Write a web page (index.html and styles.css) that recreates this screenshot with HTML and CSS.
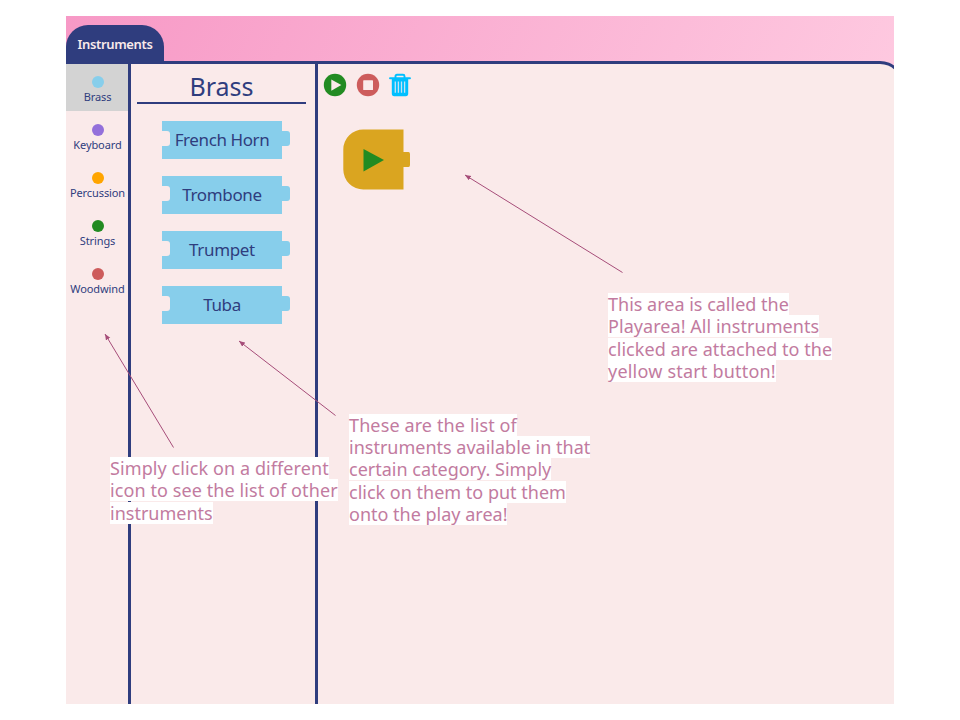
FILE: index.html
```html
<!DOCTYPE html>
<html lang="en">
<head>
<meta charset="utf-8">
<title>Instruments</title>
<link rel="stylesheet" href="styles.css">
</head>
<body>
<main class="app">
  <header class="top"><div class="tab">Instruments</div></header>
  <div class="workspace">
    <nav class="categories">
      <div class="category active"><i class="dot brass"></i><span>Brass</span></div>
      <div class="category"><i class="dot keyboard"></i><span>Keyboard</span></div>
      <div class="category"><i class="dot percussion"></i><span>Percussion</span></div>
      <div class="category"><i class="dot strings"></i><span>Strings</span></div>
      <div class="category"><i class="dot woodwind"></i><span>Woodwind</span></div>
    </nav>
    <section class="list">
      <h1>Brass</h1>
      <div class="piece horn">French Horn</div>
      <div class="piece">Trombone</div>
      <div class="piece">Trumpet</div>
      <div class="piece">Tuba</div>
    </section>
    <section class="play">
      <div class="tools">
        <svg width="24" height="24" viewBox="0 0 24 24"><circle cx="12" cy="12" r="11.2" fill="#228b22"/><path d="M8.300 6.400v11.400l10-5.700z" fill="#faeaea"/></svg>
        <svg width="24" height="24" viewBox="0 0 24 24"><circle cx="12" cy="12" r="11.2" fill="#cd5c5c"/><rect x="7.200" y="7.200" width="9.800" height="9.800" rx=".6" fill="#faeaea"/></svg>
        <svg width="22" height="24" viewBox="0 0 22 24"><path d="M6.500 5V3.300Q6.500 1.800 8 1.800h6q1.500 0 1.500 1.500V5M1 5.300h20" fill="none" stroke="#00bfff" stroke-width="1.900" stroke-linecap="round"/><path d="M2.800 5h16.400v15.500q0 2.700-2.400 2.700H5.200q-2.400 0-2.400-2.700z" fill="#00bfff"/><path d="M6.300 8.500v11.300M9.400 8.500v11.300M12.500 8.500v11.300M15.600 8.500v11.300" stroke="#c5e2f5" stroke-width="1.300"/></svg>
      </div>
      <svg class="start" width="68" height="62" viewBox="0 0 68 62"><path d="M21.500 .5h40v22.500h5q1.500 0 1.500 2v11q0 2-1.500 2h-5v22.500h-40A20 20 0 0 1 1.300 40.500v-20A20 20 0 0 1 21.500 .5z" fill="#daa520"/><path d="M21.500 20v22.500L42 31z" fill="#228b22"/></svg>
    </section>
  </div>
</main>
<svg class="arrows" width="960" height="720" viewBox="0 0 960 720">
  <defs><marker id="tip" markerWidth="7" markerHeight="6" refX="6" refY="2.500" orient="auto" markerUnits="userSpaceOnUse"><path d="M0 0l6 2.500L0 5z"/></marker></defs>
  <path d="M622.500 272.500L465 175"/>
  <path d="M335.500 415.500L239 341"/>
  <path d="M173.500 447.500L105 334"/>
</svg>
<p class="note note-category"><span>Simply click on a different</span><span>icon to see the list of other</span><span class="even">instruments</span></p>
<p class="note note-list"><span class="wide">These are the list of</span><span class="even">instruments available in that</span><span class="even">certain category. Simply</span><span class="even">click on them to put them</span><span class="even">onto the play area!</span></p>
<p class="note note-play"><span class="even">This area is called the</span><span class="slight">Playarea! All instruments</span><span class="slight">clicked are attached to the</span><span class="widest">yellow start button!</span></p>
</body>
</html>
```
FILE: styles.css
```css
* { box-sizing: border-box; }
body { margin: 0; width: 960px; height: 720px; overflow: hidden; position: relative; background: #fff; padding: 16px 66px; color: #2f3d7e; font-family: "Noto Sans", "Open Sans", sans-serif; }
.app { width: 828px; height: 688px; overflow: hidden; display: flex; flex-direction: column; background: linear-gradient(115deg, #f799c6, #fec9e0) 0 0 / 100% 60px no-repeat; }
.top { height: 45px; padding-top: 9px; flex: none; }
.tab { width: 98px; height: 37px; padding-top: 10px; border-radius: 22px 22px 0 0; background: #2f3d7e; color: #faeaea; font-size: 13px; line-height: 18px; font-weight: 600; text-align: center; letter-spacing: -.35px; }
.workspace { width: 838px; flex: 1; display: flex; border-top: 3px solid #2f3d7e; border-right: 3px solid #2f3d7e; border-top-right-radius: 24px; background: #faeaea; }
.categories { width: 62px; flex: none; }
.category { height: 48px; padding-top: 12px; display: flex; flex-direction: column; align-items: center; font-size: 11px; line-height: 15px; letter-spacing: -.1px; white-space: nowrap; }
.category.active { height: 47px; margin-bottom: 1px; background: #d3d3d3; }
.category span { margin-top: 1px; padding-left: 1px; }
.dot { width: 12px; height: 12px; margin-left: 1px; border-radius: 50%; flex: none; }
.brass { background: #87ceeb; }
.keyboard { background: #9370db; }
.percussion { background: #ffa500; }
.strings { background: #228b22; }
.woodwind { background: #cd5c5c; }
.list { width: 190px; flex: none; border-left: 3px solid #2f3d7e; border-right: 3px solid #2f3d7e; padding: 5px 9px 0 6px; }
h1 { margin: 0 0 17px; height: 35px; border-bottom: 2px solid #2f3d7e; text-align: center; font-size: 25px; line-height: 34px; font-weight: 400; }
.piece { position: relative; width: 120px; height: 38px; margin: 0 0 17px 25px; background: #87ceeb; text-align: center; font-size: 17px; line-height: 37px; letter-spacing: -.35px; white-space: nowrap; }
.horn { letter-spacing: -.4px; }
.piece::before, .piece::after { content: ""; position: absolute; top: 10px; width: 8px; height: 15px; border-radius: 0 3px 3px 0; }
.piece::before { left: 0; background: #faeaea; }
.piece::after { left: 120px; background: #87ceeb; }
.play { flex: 1; padding: 9px 0 0 5px; }
.tools { display: flex; gap: 9px; height: 24px; }
.start { display: block; margin: 32px 0 0 19px; }
.arrows { position: absolute; left: 0; top: 0; fill: none; stroke: #a64d79; stroke-width: 1; }
.arrows path { marker-end: url(#tip); }
.arrows marker path { fill: #a64d79; stroke: none; marker-end: none; }
.note { position: absolute; margin: 0; font-size: 18px; line-height: 22px; color: #c27ba0; white-space: nowrap; }
.note span { display: block; width: fit-content; height: 22px; margin-bottom: .4px; background: #fff; letter-spacing: .09px; }
.note .even { letter-spacing: 0; }
.note .slight { letter-spacing: .05px; }
.note .wide { letter-spacing: .12px; }
.note .widest { letter-spacing: .2px; }
.note-category { left: 110px; top: 457px; }
.note-list { left: 349px; top: 413.500px; }
.note-play { left: 608px; top: 293px; }
```
